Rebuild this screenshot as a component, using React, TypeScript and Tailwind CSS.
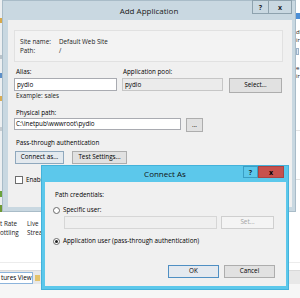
const FONT = "font-['Open_Sans','Noto_Sans',sans-serif]";

function TitleButtons({ active }: { active?: boolean }) {
  if (active) {
    return (
      <div className="absolute top-0 right-[4px] flex h-[12px]">
        <div className="w-[15px] h-full border border-[#3a9ec4] bg-[#5cc8eb] flex items-center justify-center text-[7px] font-bold leading-none text-[#1b2b33]">
          ?
        </div>
        <div className="w-[26px] h-full border border-[#a94444] bg-[#c7514d] flex items-center justify-center text-[7px] font-bold leading-none text-black">
          x
        </div>
      </div>
    );
  }
  return (
    <div className="absolute top-[-1px] right-[3px] flex h-[14px]">
      <div className="w-[17px] h-full border border-[#8ea2ae] flex items-center justify-center text-[7px] font-bold leading-none text-[#1d262b]">
        ?
      </div>
      <div className="w-[23px] h-full border border-l-0 border-[#8ea2ae] flex items-center justify-center text-[7px] font-bold leading-none text-[#1d262b]">
        x
      </div>
    </div>
  );
}

function Btn({ w, h = 13, label, tone = "normal" }: { w: number; h?: number; label: string; tone?: "normal" | "focus" | "default" | "disabled" }) {
  const tones = {
    normal: "bg-[#e1e1e1] border-[#adadad] text-black",
    focus: "bg-[#e3e9ee] border-[#8fa8bd] text-black",
    default: "bg-[#e4e9ef] border-[#4f8fc3] text-black",
    disabled: "bg-[#f4f4f4] border-[#cfcfcf] text-[#a3a3a3]",
  };
  return (
    <div
      className={`shrink-0 border flex items-center justify-center text-[6.3px] leading-none ${tones[tone]}`}
      style={{ width: w, height: h }}
    >
      {label}
    </div>
  );
}

function AddApplication() {
  return (
    <div className="absolute left-[2px] top-0 w-[294px] h-[212px] bg-[#c9d8e1] border border-[#a9bcc8] flex flex-col">
      <div className="relative h-[19px] shrink-0 flex items-center justify-center text-[8px] text-[#1a1a1a]">
        Add Application
        <TitleButtons />
      </div>
      <div className="ml-[5px] mr-[3px] mb-[4px] flex-1 bg-[#f0f0f0] text-[6.3px] text-black">
        {/* site info box */}
        <div className="mt-[10px] ml-[6px] w-[269px] h-[32px] border border-[#e1e1e1] bg-[#f3f3f3] pt-[6px] pl-[5px] text-[#222]">
          <div className="flex leading-[9px]">
            <span className="w-[39px]">Site name:</span>
            <span>Default Web Site</span>
          </div>
          <div className="flex leading-[9px]">
            <span className="w-[39px]">Path:</span>
            <span>/</span>
          </div>
        </div>

        <div className="pl-[6px]">
          <div className="mt-[5px] h-[10px] leading-[10px] flex">
            <span className="w-[108px] pl-[2px]">Alias:</span>
            <span className="pl-[1px]">Application pool:</span>
          </div>
          <div className="mt-[1px] h-[13px] flex items-start">
            <div className="w-[103px] h-[13px] border border-[#a9abb1] bg-white pl-[2px] leading-[11px]">pydio</div>
            <div className="ml-[5px] w-[101px] h-[13px] border border-[#c6c6c6] bg-[#ebebeb] pl-[2px] leading-[11px]">pydio</div>
            <div className="ml-[6px]">
              <Btn w={53} h={15} label="Select..." />
            </div>
          </div>
          <div className="h-[10px] leading-[10px] pl-[2px] text-[#222]">Example: sales</div>

          <div className="mt-[7px] h-[10px] leading-[10px] pl-[2px]">Physical path:</div>
          <div className="h-[12px] flex items-start">
            <div className="w-[167px] h-[12px] border border-[#a9abb1] bg-white pl-[1px] leading-[10px]">
              C:\inetpub\wwwroot\pydio
            </div>
            <div className="ml-[5px]">
              <Btn w={17} h={14} label="..." />
            </div>
          </div>

          <div className="mt-[8px] h-[10px] leading-[10px] pl-[2px]">Pass-through authentication</div>
          <div className="mt-[3px] flex gap-[8px] pl-[1px]">
            <Btn w={49} label="Connect as..." tone="focus" />
            <Btn w={55} label="Test Settings..." />
          </div>

          <div className="mt-[12px] flex items-center pl-[1px]">
            <div className="w-[8px] h-[8px] border border-[#6d6d6d] bg-white" />
            <span className="ml-[3px] leading-[8px]">Enable Preload</span>
          </div>
        </div>
      </div>
    </div>
  );
}

function Radio({ checked }: { checked?: boolean }) {
  return (
    <div className="w-[7px] h-[7px] rounded-full border border-[#6a6a6a] bg-white flex items-center justify-center shrink-0">
      {checked && <div className="w-[3px] h-[3px] rounded-full bg-[#222]" />}
    </div>
  );
}

function ConnectAs() {
  return (
    <div className="absolute left-[41px] top-[165px] w-[248px] h-[125px] bg-[#5cc8eb] border border-[#44b2da] flex flex-col">
      <div className="relative h-[16px] shrink-0 flex items-center justify-center text-[8px] text-[#111]">
        Connect As
        <TitleButtons active />
      </div>
      <div className="ml-[3px] mr-[2px] mb-[3px] flex-1 bg-[#f0f0f0] text-[6.3px] text-black">
        <div className="mt-[8px] h-[10px] leading-[10px] pl-[10px]">Path credentials:</div>
        <div className="mt-[5px] h-[10px] flex items-center pl-[8px]">
          <Radio />
          <span className="ml-[3px] leading-[10px]">Specific user:</span>
        </div>
        <div className="mt-[1px] flex pl-[19px] gap-[4px]">
          <div className="w-[153px] h-[13px] border border-[#d6d6d6] bg-[#efefef]" />
          <Btn w={53} label="Set..." tone="disabled" />
        </div>
        <div className="mt-[7px] h-[10px] flex items-center pl-[8px]">
          <Radio checked />
          <span className="ml-[3px] leading-[10px]">Application user (pass-through authentication)</span>
        </div>
        <div className="mt-[19px] flex justify-end gap-[5px] pr-[11px]">
          <Btn w={51} label="OK" tone="default" />
          <Btn w={51} label="Cancel" />
        </div>
      </div>
    </div>
  );
}

function Backdrop() {
  return (
    <>
      {/* left edge of the IIS manager pane */}
      <div className="absolute left-0 top-0 w-[2px] h-[212px] bg-[#eceff1]">
        <div className="mt-[18px] h-[5px] bg-[#d8a94a]" />
        <div className="mt-[32px] h-[4px] bg-[#b9c3ca]" />
        <div className="mt-[14px] h-[5px] bg-[#5c8fc8]" />
        <div className="mt-[18px] h-[5px] bg-[#d9ad55]" />
        <div className="mt-[26px] h-[4px] bg-[#c6ccd1]" />
        <div className="mt-[60px] h-[6px] bg-[#6aa33c]" />
      </div>
      <div className="absolute left-0 top-[205px] w-[8px] h-[7px] bg-[#6f9a35]" />

      {/* right edge */}
      <div className="absolute left-[296px] top-0 w-[4px] h-[212px] text-[6px] leading-[8px] text-[#222]">
        <div className="mt-[13px] h-[6px] w-[4px] bg-[#4d8fd6]" />
        <div className="mt-[9px]">dl</div>
        <div>ir</div>
        <div className="mt-[4px] h-[7px] w-[3px] border border-[#9cb3c9] bg-[#dfe9f3]" />
        <div className="mt-[9px]">e</div>
        <div>ir</div>
        <div className="mt-[50px] h-px w-full bg-[#e3e3e3]" />
        <div className="mt-[48px] h-px w-full bg-[#e3e3e3]" />
      </div>

      {/* feature icons captions */}
      <div className="absolute left-0 top-[219px] flex text-[6.3px] leading-[9px] text-[#222]">
        <div className="w-[27px]">
          <div>t Rate</div>
          <div>ottling</div>
        </div>
        <div>
          <div>Live</div>
          <div>Strea</div>
        </div>
      </div>
      <div className="absolute left-0 right-0 top-[262px] h-px bg-[#ececec]" />

      {/* bottom tab bar */}
      <div className="absolute left-0 right-0 top-[270px] h-[14px] bg-[#e8e8e8] border-t border-[#d9d9d9] flex items-center">
        <div className="h-[12px] w-[33px] bg-white border border-[#8cb4dc] border-l-0 text-[6.3px] leading-[10px] text-black pl-[1px] whitespace-nowrap">
          tures View
        </div>
        <div className="ml-[2px] w-[5px] h-[6px] bg-[#e3c26a]" />
      </div>
      <div className="absolute left-0 right-0 top-[284px] bottom-0 bg-[#f6f6f6]" />
    </>
  );
}

export default function App() {
  return (
    <div className={`relative w-[300px] h-[298px] overflow-hidden bg-white ${FONT}`}>
      <Backdrop />
      <AddApplication />
      <ConnectAs />
    </div>
  );
}
